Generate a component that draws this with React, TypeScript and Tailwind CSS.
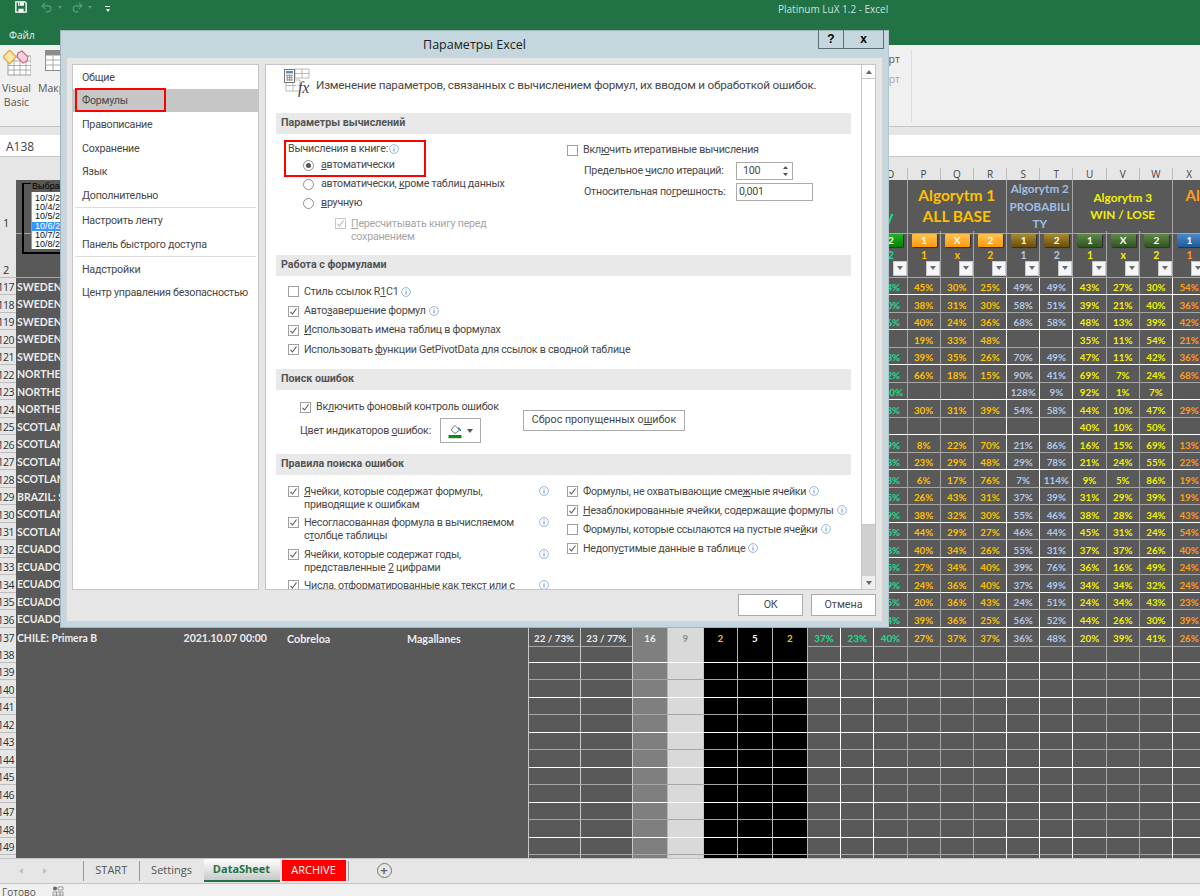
import React from "react";
import { Undo2, Redo2 } from "lucide-react";

const gridCols =
  "grid grid-cols-[16px_167.6px_102.4px_121px_121.6px_52px_52.4px_35px_35.6px_34.4px_35px_35px_repeat(14,33.2px)]";

const GREEN = "text-[#12e08c]";
const ORANGE = "text-[#ffc000]";
const BLUE = "text-[#b4c7e7]";
const YEL = "text-[#f2f200]";
const ORG2 = "text-[#ff9c1a]";
const colColor = [GREEN, GREEN, GREEN, ORANGE, ORANGE, ORANGE, BLUE, BLUE, YEL, YEL, YEL, ORG2];

// right border of columns E.. (index 0 = E)
const colBorder = [
  "border-[#c8c8c8]", "border-[#c8c8c8]", "border-[#b5b5b5]", "border-[#c8c8c8]", "border-[#b5b5b5]", "border-[#b5b5b5]",
  "border-[#b5b5b5]", "border-white", "border-white", "border-[#a6a6a6]", "border-[#a6a6a6]", "border-[#a6a6a6]",
  "border-white", "border-white", "border-white", "border-[#a6a6a6]", "border-[#a6a6a6]", "border-white",
  "border-white", "border-white", "border-white", "border-white",
];

const rowData: [number, string, string, number[]][] = [
  [117, "SWEDEN", "34", [45, 30, 25, 49, 49, 43, 27, 30, 54]],
  [118, "SWEDEN", "30", [38, 31, 30, 58, 51, 39, 21, 40, 36]],
  [119, "SWEDEN", "36", [40, 24, 36, 68, 58, 48, 13, 39, 42]],
  [120, "SWEDEN", "", [19, 33, 48, 0, 0, 35, 11, 54, 21]],
  [121, "SWEDEN", "38", [39, 35, 26, 70, 49, 47, 11, 42, 36]],
  [122, "NORTHERN", "32", [66, 18, 15, 90, 41, 69, 7, 24, 68]],
  [123, "NORTHERN", "100", [0, 0, 0, 128, 9, 92, 1, 7, 0]],
  [124, "NORTHERN", "33", [30, 31, 39, 54, 58, 44, 10, 47, 29]],
  [125, "SCOTLAND", "", [0, 0, 0, 0, 0, 40, 10, 50, 0]],
  [126, "SCOTLAND", "39", [8, 22, 70, 21, 86, 16, 15, 69, 13]],
  [127, "SCOTLAND", "38", [23, 29, 48, 29, 78, 21, 24, 55, 22]],
  [128, "SCOTLAND", "38", [6, 17, 76, 7, 114, 9, 5, 86, 19]],
  [129, "BRAZIL: Serie", "35", [26, 43, 31, 37, 39, 31, 29, 39, 19]],
  [130, "SCOTLAND", "39", [38, 32, 30, 55, 46, 38, 28, 34, 43]],
  [131, "SCOTLAND", "35", [44, 29, 27, 46, 44, 45, 31, 24, 54]],
  [132, "ECUADOR", "38", [40, 34, 26, 55, 31, 37, 37, 26, 40]],
  [133, "ECUADOR", "35", [27, 34, 40, 39, 76, 36, 16, 49, 24]],
  [134, "ECUADOR", "39", [24, 36, 40, 37, 49, 34, 34, 32, 24]],
  [135, "ECUADOR", "35", [20, 36, 43, 24, 51, 24, 34, 43, 23]],
  [136, "ECUADOR", "34", [39, 36, 25, 56, 52, 44, 26, 30, 39]],
];

function whiteLine(n: number) {
  if (n <= 128) return n % 2 === 1;
  return n % 2 === 0;
}

function RowNum({ n }: { n: number }) {
  return (
    <div className="h-full bg-[#e6e6e6] border-b border-[#bdbdbd] text-[#333] text-[10.5px] tracking-[-0.5px] font-normal leading-[14px] overflow-hidden flex justify-end items-center pr-[2px] pt-[3px] font-['Open_Sans']">
      <span className="shrink-0">{n}</span>
    </div>
  );
}

function HeadNum({ n, pb }: { n: number; pb: string }) {
  return (
    <div className={`h-full bg-[#e6e6e6] border-b border-[#bdbdbd] text-[#333] text-[11px] font-normal leading-[14px] flex items-end pl-[3px] font-['Open_Sans'] ${pb}`}>
      {n}
    </div>
  );
}

function Cell({ idx, text, color, bg, line }: { idx: number; text?: string; color?: string; bg?: string; line: string }) {
  return (
    <div className={`flex items-center justify-center pt-[3px] leading-[12px] border-r border-b ${colBorder[idx]} ${line} ${bg ?? ""} ${color ?? ""}`}>
      {text}
    </div>
  );
}

function DataRow({ n, a, vals }: { n: number; a: string; vals: number[] }) {
  const line = whiteLine(n) ? "!border-b-white" : "!border-b-[#a6a6a6]";
  return (
    <div className={`${gridCols} h-[17.5px] font-['Lato'] font-bold text-[9.8px] text-[#ececec]`}>
      <RowNum n={n} />
      <div className="col-span-4 flex items-center pl-[1px] pt-[3px] text-[10.5px] overflow-hidden whitespace-nowrap border-r border-[#c8c8c8]">{a}</div>
      {Array.from({ length: 9 }).map((_, i) => (
        <Cell key={i} idx={i} line={line} bg={i === 2 ? "bg-[#7f7f7f]" : i === 3 ? "bg-[#d9d9d9]" : i >= 4 && i <= 6 ? "bg-black" : ""} />
      ))}
      {vals.map((v, i) => (
        <Cell key={i} idx={i + 9} line={line} text={v ? `${v}%` : ""} color={colColor[i + 2]} />
      ))}
    </div>
  );
}

function Row137() {
  const line = "!border-b-[#a6a6a6]";
  const vals = [37, 23, 40, 27, 37, 37, 36, 48, 20, 39, 41, 26];
  return (
    <div className={`${gridCols} h-[17.5px] font-['Lato'] font-bold text-[9.8px] text-[#ececec]`}>
      <RowNum n={137} />
      <div className="flex items-center pl-[1px] pt-[3px] text-[10.4px] whitespace-nowrap">CHILE: Primera B</div>
      <div className="flex items-center pt-[3px] text-[10.5px] whitespace-nowrap">2021.10.07 00:00</div>
      <div className="flex items-center pt-[3px] pl-[1px] text-[10.8px] whitespace-nowrap">Cobreloa</div>
      <div className="flex items-center pt-[3px] text-[10.7px] whitespace-nowrap border-r border-[#c8c8c8]">Magallanes</div>
      <Cell idx={0} line={line} text="22 / 73%" />
      <Cell idx={1} line={line} text="23 / 77%" />
      <Cell idx={2} line={line} text="16" bg="bg-[#7f7f7f]" />
      <Cell idx={3} line={line} text="9" bg="bg-[#d9d9d9]" color="text-[#8c8c8c]" />
      <Cell idx={4} line={line} text="2" bg="bg-black" color={ORANGE} />
      <Cell idx={5} line={line} text="5" bg="bg-black" color="text-white" />
      <Cell idx={6} line={line} text="2" bg="bg-black" color={ORANGE} />
      {vals.map((v, i) => (
        <Cell key={i} idx={i + 7} line={line} text={`${v}%`} color={colColor[i]} />
      ))}
    </div>
  );
}

function EmptyRow({ n }: { n: number }) {
  const line = whiteLine(n) ? "!border-b-white" : "!border-b-[#a6a6a6]";
  return (
    <div className={`${gridCols} h-[17.5px]`}>
      <RowNum n={n} />
      <div className="col-span-4 border-r border-[#c8c8c8]" />
      {Array.from({ length: 21 }).map((_, i) => (
        <Cell key={i} idx={i} line={line} bg={i === 2 ? "bg-[#7f7f7f]" : i === 3 ? "bg-[#d9d9d9]" : i >= 4 && i <= 6 ? "bg-black" : ""} />
      ))}
    </div>
  );
}

function HeadCell({ label, sub, btn, color }: { label: string; sub: string; btn: string; color: string }) {
  return (
    <div className={`relative border-r border-b border-[#a6a6a6] flex flex-col items-start pl-[4px] pt-[3px] ${color}`}>
      <div className={`w-[25px] h-[13px] rounded-[1px] flex items-center justify-center text-white text-[10px] font-bold leading-none shadow-[1px_1px_1px_rgba(0,0,0,0.5)] ${btn}`}>
        {label}
      </div>
      <div className="w-[25px] text-center text-[10.5px] font-bold leading-[15px] mt-[1px]">{sub}</div>
      <div className="absolute right-0 bottom-[1px] w-[14px] h-[15px] bg-[#f4f6fa] border border-[#c9c9c9] flex items-center justify-center">
        <div className="w-0 h-0 border-l-[3.5px] border-r-[3.5px] border-t-[4px] border-l-transparent border-r-transparent border-t-[#6b6b6b]" />
      </div>
    </div>
  );
}

function HeaderRows() {
  return (
    <>
      <div className={`${gridCols} h-[50.5px] font-['Lato'] font-bold`}>
        <HeadNum n={1} pb="pb-[3px]" />
        <div className="col-span-14 border-r border-b border-[#a6a6a6] flex items-end justify-end pr-[13px] pb-[3px] text-[17px] text-[#12e08c] whitespace-nowrap">
          Probability
        </div>
        <div className="col-span-3 border-r border-b border-[#a6a6a6] flex flex-col items-center justify-center text-[#ffc000] text-[15.5px] leading-[21.5px]">
          <span>Algorytm 1</span>
          <span>ALL BASE</span>
        </div>
        <div className="col-span-2 border-r border-b border-[#a6a6a6] flex flex-col items-center justify-center text-[#9fbfe4] text-[11.7px] leading-[17.5px]">
          <span>Algorytm 2</span>
          <span>PROBABILI</span>
          <span>TY</span>
        </div>
        <div className="col-span-3 border-r border-b border-[#a6a6a6] flex flex-col items-center justify-center text-[#f2f200] text-[11.8px] leading-[17.5px]">
          <span>Algorytm 3</span>
          <span>WIN / LOSE</span>
        </div>
        <div className="col-span-3 border-b border-[#a6a6a6] flex flex-col items-center justify-start pt-[5px] text-[#ff9c1a] text-[15px] leading-[20px] whitespace-nowrap">
          <span>Algorytm 4</span>
        </div>
      </div>
      <div className={`${gridCols} h-[47px] font-['Lato']`}>
        <HeadNum n={2} pb="pb-0" />
        <div className="col-span-13 border-r border-b border-[#a6a6a6]" />
        <HeadCell label="2" sub="2" btn="bg-gradient-to-b from-[#22b022] to-[#068006]" color={GREEN} />
        <HeadCell label="1" sub="1" btn="bg-gradient-to-b from-[#ffc24a] to-[#ff9a00]" color={ORANGE} />
        <HeadCell label="X" sub="x" btn="bg-gradient-to-b from-[#ffc24a] to-[#ff9a00]" color={ORANGE} />
        <HeadCell label="2" sub="2" btn="bg-gradient-to-b from-[#ffc24a] to-[#ff9a00]" color={ORANGE} />
        <HeadCell label="1" sub="1" btn="bg-gradient-to-b from-[#a68a30] to-[#6b4f08]" color={BLUE} />
        <HeadCell label="2" sub="2" btn="bg-gradient-to-b from-[#a68a30] to-[#6b4f08]" color={BLUE} />
        <HeadCell label="1" sub="1" btn="bg-gradient-to-b from-[#5f8a4a] to-[#2f5420]" color={YEL} />
        <HeadCell label="X" sub="x" btn="bg-gradient-to-b from-[#5f8a4a] to-[#2f5420]" color={YEL} />
        <HeadCell label="2" sub="2" btn="bg-gradient-to-b from-[#5f8a4a] to-[#2f5420]" color={YEL} />
        <HeadCell label="1" sub="1" btn="bg-gradient-to-b from-[#4a8ac8] to-[#1f5a9a]" color={ORG2} />
      </div>
    </>
  );
}

const letters = ["A", "C", "D", "E", "F", "G", "H", "I", "J", "K", "L", "M", "N", "O", "P", "Q", "R", "S", "T", "U", "V", "W", "X", "Y", "Z"];

function ColumnHeaders() {
  return (
    <div className={`${gridCols} h-[12px] bg-[#e6e6e6] text-[#444] text-[10px] leading-[12px] font-['Open_Sans']`}>
      <div />
      {letters.map((l) => (
        <div key={l} className="text-center border-r border-[#bdbdbd]">
          {l}
        </div>
      ))}
    </div>
  );
}

function Info({ className = "" }: { className?: string }) {
  return (
    <svg width="10" height="10" viewBox="0 0 10 10" className={`shrink-0 ${className}`}>
      <circle cx="5" cy="5" r="4.4" fill="none" stroke="#8ab0dc" strokeWidth="0.9" />
      <path d="M5 2.4v.9M5 4.2v3.3" stroke="#5f8fc8" strokeWidth="1" />
    </svg>
  );
}

function Check({ on, disabled, className = "" }: { on?: boolean; disabled?: boolean; className?: string }) {
  return (
    <span className={`inline-flex shrink-0 w-[11px] h-[11px] border ${disabled ? "border-[#c8c8c8]" : "border-[#a0a0a0]"} bg-white items-center justify-center ${className}`}>
      {on && (
        <svg width="9" height="9" viewBox="0 0 9 9">
          <path d="M1.5 4.8 3.5 7 7.5 1.5" fill="none" stroke={disabled ? "#b5b5b5" : "#555"} strokeWidth="1.1" />
        </svg>
      )}
    </span>
  );
}

function Radio({ on }: { on?: boolean }) {
  return (
    <span className="inline-flex shrink-0 w-[11px] h-[11px] rounded-full border border-[#8f8f8f] bg-white items-center justify-center">
      {on && <span className="w-[5px] h-[5px] rounded-full bg-[#555]" />}
    </span>
  );
}

function Section({ children }: { children: React.ReactNode }) {
  return (
    <div className="ml-[10px] w-[575px] h-[21px] bg-[#e9e9e9] flex items-center pl-[5px] font-bold text-[#555] text-[10.7px] tracking-normal">
      {children}
    </div>
  );
}

function FxIcon() {
  return (
    <svg width="30" height="30" viewBox="0 0 30 30" className="shrink-0">
      <path d="M12 1h14v9H12zM3 12h14v11H3zM19 1v9M12 5.5h14M3 17.5h10M10 12v11" fill="none" stroke="#a8a8a8" strokeWidth="0.8" />
      <rect x="1.5" y="1.5" width="10" height="13" fill="#fff" stroke="#666" strokeWidth="0.9" />
      <rect x="3" y="3" width="7" height="2.4" fill="#4f8fd0" />
      <path d="M3 7.5h7M3 9.7h7M3 11.9h7M4.7 6.5v6.6M6.5 6.5v6.6M8.3 6.5v6.6" stroke="#8a8a8a" strokeWidth="0.8" />
      <text x="15" y="25" fontFamily="Liberation Serif" fontStyle="italic" fontSize="16" fill="#444">fx</text>
    </svg>
  );
}

const list1 = ["Общие", "Формулы", "Правописание", "Сохранение", "Язык", "Дополнительно"];
const list2 = ["Настроить ленту", "Панель быстрого доступа"];
const list3 = ["Надстройки", "Центр управления безопасностью"];

function ListItem({ t, sel }: { t: string; sel?: boolean }) {
  return <div className={`h-[23.6px] flex items-center pl-[9px] pt-[2px] whitespace-nowrap ${sel ? "bg-[#c6c6c6]" : ""}`}>{t}</div>;
}

function RedBox({ className }: { className: string }) {
  return <div className={`absolute border-2 border-[#ff0000] ${className}`} />;
}

function Dialog() {
  return (
    <div className="absolute left-[60px] top-[30px] w-[829px] h-[598px] bg-[#c4d7de] border border-[#9fb2ba] border-r-[#b3c6cd] flex flex-col font-['Roboto'] text-[10.7px] tracking-[-0.25px] text-[#484848]">
      <div className="relative h-[26px] flex items-end justify-center text-[#222] text-[12.5px] leading-[20px] tracking-normal shrink-0 font-['Open_Sans']">
        <span className="-translate-y-[2px]">Параметры Excel</span>
        <div className="absolute right-[4px] top-[-1px] flex h-[19px] border border-[#5b6d75] border-t-0 text-black font-bold text-[12px]">
          <div className="w-[25px] border-r border-[#5b6d75] flex items-center justify-center font-['Liberation_Sans']">?</div>
          <div className="w-[39px] flex items-center justify-center font-['Liberation_Sans']">x</div>
        </div>
      </div>
      <div className="mx-[5px] flex-1 bg-[#e6e6e6] border border-[#d4d4d4] mb-[5px] flex flex-col pt-[6px] pl-[5px] pr-[6px]">
        <div className="flex gap-[6px] h-[526px]">
          <div className="relative w-[187px] bg-white border border-[#c6c6c6] shrink-0">
            {list1.map((t) => (
              <ListItem key={t} t={t} sel={t === "Формулы"} />
            ))}
            <div className="h-px bg-[#dcdcdc] mx-[2px] mb-[1px]" />
            {list2.map((t) => (
              <ListItem key={t} t={t} />
            ))}
            <div className="h-px bg-[#dcdcdc] mx-[2px]" />
            {list3.map((t) => (
              <ListItem key={t} t={t} />
            ))}
            <RedBox className="left-[2px] top-[23px] w-[91px] h-[24px]" />
          </div>

          <div className="relative flex-1 bg-white border border-[#c6c6c6] flex overflow-hidden">
            <div className="flex-1 overflow-hidden">
              <div className="h-[48px] flex items-start pl-[17px] pt-[3px] gap-[3px]">
                <FxIcon />
                <span className="mt-[9px] text-[11.7px] tracking-[-0.2px] whitespace-nowrap">
                  Изменение параметров, связанных с вычислением формул, их вводом и обработкой ошибок.
                </span>
              </div>

              <Section>Параметры вычислений</Section>
              <div className="h-[121px] flex pl-[22px] pt-[7px]">
                <div className="w-[279px] shrink-0">
                  <div className="h-[16px] flex items-center gap-[1px]">
                    Вычисления в книге:<Info />
                  </div>
                  <div className="pl-[15px] -mt-[1px]">
                    <div className="h-[19px] flex items-center gap-[7px]"><Radio on /><span><u>а</u>втоматически</span></div>
                    <div className="h-[19px] flex items-center gap-[7px]"><Radio /><span>автоматически, <u>к</u>роме таблиц данных</span></div>
                    <div className="h-[19px] flex items-center gap-[7px]"><Radio /><span><u>в</u>ручную</span></div>
                    <div className="flex items-start gap-[5px] pl-[32px] pt-[4px] leading-[13px] text-[#a6a6a6]">
                      <Check on disabled className="mt-[1px]" />
                      <span><u>П</u>ересчитывать книгу перед<br />сохранением</span>
                    </div>
                  </div>
                </div>
                <div>
                  <div className="h-[18px] flex items-center gap-[5px]">
                    <Check />
                    <span>Вкл<u>ю</u>чить итеративные вычисления</span>
                  </div>
                  <div className="h-[20px] mt-[2px] flex items-center pl-[17px]">
                    <span className="w-[152px] shrink-0 whitespace-nowrap">Предельное <u>ч</u>исло итераций:</span>
                    <div className="w-[57px] h-[18px] border border-[#ababab] flex items-center justify-between pl-[6px] pr-[3px]">
                      <span>100</span>
                      <svg width="7" height="12" viewBox="0 0 7 12"><path d="M3.5 1 6 4H1zM3.5 11 1 8h5z" fill="#555" /></svg>
                    </div>
                  </div>
                  <div className="h-[20px] mt-[1px] flex items-center pl-[17px]">
                    <span className="w-[152px] shrink-0 whitespace-nowrap">Относительная по<u>г</u>решность:</span>
                    <div className="w-[77px] h-[18px] border border-[#ababab] flex items-center pl-[2px]">0,001</div>
                  </div>
                </div>
              </div>

              <Section>Работа с формулами</Section>
              <div className="h-[93px] pl-[22px] pt-[6px]">
                {[
                  [false, <>Стиль ссылок R<u>1</u>C1</>, true],
                  [true, <>Авто<u>з</u>авершение формул</>, true],
                  [true, <><u>И</u>спользовать имена таблиц в формулах</>, false],
                  [true, <>Использовать <u>ф</u>ункции GetPivotData для ссылок в сводной таблице</>, false],
                ].map(([on, t, i], k) => (
                  <div key={k} className="h-[19.4px] flex items-center gap-[5px]">
                    <Check on={on as boolean} />
                    <span>{t as React.ReactNode}</span>
                    {i && <Info className="-ml-[2px]" />}
                  </div>
                ))}
              </div>

              <Section>Поиск ошибок</Section>
              <div className="h-[64px] flex pl-[34px]">
                <div className="w-[223px] shrink-0">
                  <div className="h-[18px] mt-[8px] flex items-center gap-[5px]">
                    <Check on />
                    <span>Вк<u>л</u>ючить фоновый контроль ошибок</span>
                  </div>
                  <div className="flex items-center mt-[2px]">
                    <span className="w-[140px] shrink-0 whitespace-nowrap pt-[1px]">Цвет индикаторов <u>о</u>шибок:</span>
                    <div className="w-[41px] h-[25px] border border-[#ababab] flex items-center justify-center gap-[5px]">
                      <svg width="14" height="16" viewBox="0 0 14 16">
                        <path d="M3 7 7 2.5l4.5 4.5L7 10.5z" fill="#fff" stroke="#666" strokeWidth="0.9" />
                        <path d="M10 5c1.6.6 2.5 1.7 2.5 3" fill="none" stroke="#3c7fc4" strokeWidth="1.4" />
                        <rect x="0.5" y="12" width="13" height="3.2" fill="#0c8a12" />
                      </svg>
                      <span className="w-0 h-0 border-l-[3.5px] border-r-[3.5px] border-t-[4px] border-l-transparent border-r-transparent border-t-[#555]" />
                    </div>
                  </div>
                </div>
                <div className="mt-[20px] w-[162px] h-[21px] border border-[#ababab] flex items-center justify-center whitespace-nowrap tracking-normal">
                  Сброс пропущенных о<u>ш</u>ибок
                </div>
              </div>

              <Section>Правила поиска ошибок</Section>
              <div className="flex pl-[22px] pt-[10px] leading-[13px]">
                <div className="w-[279px] shrink-0">
                  {[
                    <><u>Я</u>чейки, которые содержат формулы,<br />приводящие к ошибкам</>,
                    <>Несогласованная формула в вычисляемом<br />с<u>т</u>олбце таблицы</>,
                    <>Ячейки, которые содержат годы,<br />представленные <u>2</u> цифрами</>,
                    <>Числа, отформатированные как т<u>е</u>кст или с<br />предшествующим апострофом</>,
                  ].map((t, k) => (
                    <div key={k} className="h-[31.3px] flex items-start">
                      <Check on className="mt-[1px] mr-[5px]" />
                      <span className="w-[235px] shrink-0 whitespace-nowrap">{t}</span>
                      <Info className="mt-[1px]" />
                    </div>
                  ))}
                </div>
                <div>
                  {[
                    [true, <>Формулы, не охватывающие сме<u>ж</u>ные ячейки</>],
                    [true, <><u>Н</u>езаблокированные ячейки, содержащие формулы</>],
                    [false, <>Формулы, которые ссылаются на пустые яче<u>й</u>ки</>],
                    [true, <>Недопу<u>с</u>тимые данные в таблице</>],
                  ].map(([on, t], k) => (
                    <div key={k} className="h-[19px] flex items-start gap-[5px]">
                      <Check on={on as boolean} className="mt-[1px]" />
                      <span className="whitespace-nowrap">{t as React.ReactNode}</span>
                      <Info className="mt-[1px] -ml-[2px]" />
                    </div>
                  ))}
                </div>
              </div>
            </div>

            <div className="w-[14px] shrink-0 flex flex-col border-l border-[#c6c6c6] bg-[#d0d0d0]">
              <div className="h-[14px] bg-white border-b border-[#c6c6c6] flex items-center justify-center">
                <span className="w-0 h-0 border-l-[3.5px] border-r-[3.5px] border-b-[4px] border-l-transparent border-r-transparent border-b-[#666]" />
              </div>
              <div className="h-[446px] bg-white border-b border-[#c6c6c6]" />
              <div className="flex-1" />
              <div className="h-[13px] bg-[#eeeeee] flex items-center justify-center">
                <span className="w-0 h-0 border-l-[3.5px] border-r-[3.5px] border-t-[4px] border-l-transparent border-r-transparent border-t-[#666]" />
              </div>
            </div>
            <RedBox className="left-[18px] top-[75px] w-[142px] h-[37px]" />
          </div>
        </div>
        <div className="flex justify-end gap-[8px] mt-[4px]">
          <div className="w-[65px] h-[22px] bg-white border border-[#ababab] flex items-center justify-center">ОК</div>
          <div className="w-[65px] h-[22px] bg-white border border-[#ababab] flex items-center justify-center tracking-normal">Отмена</div>
        </div>
      </div>
    </div>
  );
}

function TitleBar() {
  return (
    <div className="h-[45px] bg-[#217346] shrink-0 text-white font-['Open_Sans']">
      <div className="flex items-start h-[19px] pl-[15px] pt-[1px]">
        <svg width="12" height="12" viewBox="0 0 14 14">
          <path d="M1 1h10.5L13 2.5V13H1z" fill="none" stroke="#fff" strokeWidth="1.6" />
          <path d="M3.5 1.5h7v4h-7zM4 9h6v4H4z" fill="#fff" />
          <path d="M5.2 2v3" stroke="#217346" />
        </svg>
        <Undo2 size={13} className="ml-[13px] text-[#5f9d7b]" />
        <span className="ml-[5px] mt-[5px] w-0 h-0 border-l-[2.5px] border-r-[2.5px] border-t-[3px] border-l-transparent border-r-transparent border-t-[#5f9d7b]" />
        <Redo2 size={13} className="ml-[9px] text-[#5f9d7b]" />
        <span className="ml-[4px] mt-[5px] w-0 h-0 border-l-[2.5px] border-r-[2.5px] border-t-[3px] border-l-transparent border-r-transparent border-t-[#5f9d7b]" />
        <div className="ml-[13px] mt-[5px] flex flex-col items-center gap-[2px]">
          <span className="w-[5px] h-px bg-white" />
          <span className="w-0 h-0 border-l-[2.5px] border-r-[2.5px] border-t-[3px] border-l-transparent border-r-transparent border-t-white" />
        </div>
        <span className="ml-[668px] mt-[1px] text-[10px] leading-[15px] text-[#cfe0d6] whitespace-nowrap">Platinum LuX 1.2 - Excel</span>
      </div>
      <div className="pl-[9px] mt-[9px] text-[10px] text-[#e8f0eb] leading-[14px]">Файл</div>
    </div>
  );
}

function Ribbon() {
  return (
    <div className="h-[81px] bg-[#f0f0f0] shrink-0 pt-[5px] font-['Open_Sans'] text-[10.5px] text-[#555]">
      <div className="w-[912px] h-[72px] border-r border-[#dcdcdc] flex justify-between pr-[11px]">
        <div className="flex pl-[3px] gap-[8px]">
          <div className="w-[27px] flex flex-col items-center">
            <svg width="28" height="26" viewBox="0 0 28 26" className="shrink-0">
              <rect x="5" y="6" width="23" height="19" fill="#fff" stroke="#8c8c8c" strokeWidth="0.8" />
              <path d="M5 11h23M5 15.5h23M5 20h23M11 6v19M17 6v19M23 6v19" stroke="#9a9a9a" strokeWidth="0.8" />
              <path d="M0 7 6.5 0 13 7l-6.5 7z" fill="#ffe7a8" stroke="#e3a93a" strokeWidth="1.2" />
              <path d="M15 3l4-2 6 6-1 4-4 2-6-6z" fill="#f8d2dd" stroke="#d9657f" strokeWidth="1.2" />
            </svg>
            <div className="mt-[5px] text-center leading-[14px]">Visual<br />Basic</div>
          </div>
          <div className="w-[40px] flex flex-col items-start">
            <svg width="40" height="26" viewBox="0 0 40 26" className="ml-[7px] shrink-0">
              <rect x="0.5" y="0.5" width="30" height="20" fill="#fff" stroke="#8c8c8c" />
              <rect x="0.5" y="0.5" width="30" height="5" fill="#8c8c8c" />
              <path d="M0 10h30M0 15h30M8 6v14M16 6v14" stroke="#9a9a9a" strokeWidth="0.8" />
            </svg>
            <div className="mt-[5px] leading-[14px] whitespace-nowrap">Макросы</div>
          </div>
        </div>
        <div className="flex flex-col items-end -mt-[1px] leading-[20px]">
          <span>Экспорт</span>
          <span className="text-[#a8a8a8]">Импорт</span>
        </div>
      </div>
    </div>
  );
}

function FormulaBar() {
  return (
    <div className="shrink-0 font-['Open_Sans']">
      <div className="h-[9px] bg-[#e6e6e6] border-t border-[#c6c6c6]" />
      <div className="h-[22px] bg-white border-b border-[#c6c6c6] flex items-center pl-[6px] pt-[2px] text-[12px] text-[#444]">A138</div>
      <div className="h-[11px] bg-[#e6e6e6]" />
    </div>
  );
}

function SheetListBox() {
  const dates = ["10/3/2021", "10/4/2021", "10/5/2021", "10/6/2021", "10/7/2021", "10/8/2021"];
  return (
    <div className="absolute left-[22px] top-[183px] w-[120px] h-[71px] border-l-2 border-b-2 border-t border-black font-['Liberation_Sans'] text-[9px] leading-[9px] text-[#111]">
      <div className="absolute left-[7px] -top-[2px] bg-[#595959] text-black px-px">Выбрать дату</div>
      <div className="absolute left-[7px] top-[8px] w-[100px] h-[57px] bg-white pt-[2px] pl-[3px] border-l border-[#999]">
        {dates.map((d, i) => (
          <div key={d} className={`h-[9.2px] -ml-[3px] pl-[3px] ${i === 3 ? "bg-[#3399ff] text-white" : ""}`}>{d}</div>
        ))}
      </div>
    </div>
  );
}

function Tabs() {
  return (
    <div className="h-[25px] bg-[#e6e6e6] border-t border-[#c6c6c6] shrink-0 flex items-center pb-[1px] font-['Open_Sans'] text-[11px] text-[#555]">
      <div className="w-[83px] flex gap-[20px] pl-[19px]">
        <span className="w-0 h-0 border-t-[3px] border-b-[3px] border-r-[4px] border-t-transparent border-b-transparent border-r-[#c2c2c2]" />
        <span className="w-0 h-0 border-t-[3px] border-b-[3px] border-l-[4px] border-t-transparent border-b-transparent border-l-[#c2c2c2]" />
      </div>
      <div className="w-[56.5px] h-[20px] border-l border-r border-[#9a9a9a] flex items-center justify-center">START</div>
      <div className="w-[64px] flex justify-center">Settings</div>
      <div className="w-[76px] h-[23px] bg-gradient-to-b from-[#ffffff] to-[#c9c9c9] border-b-2 border-[#217346] flex items-center justify-center font-bold text-[#217346]">DataSheet</div>
      <div className="ml-[2px] w-[64px] h-[21px] bg-[#ff0000] text-white flex items-center justify-center">ARCHIVE</div>
      <div className="ml-[2px] w-px h-[20px] bg-[#9a9a9a]" />
      <div className="ml-[28px] w-[15px] h-[15px] rounded-full border border-[#777] flex items-center justify-center text-[#666] text-[13px] leading-none font-bold">
        +
      </div>
    </div>
  );
}

function StatusBar() {
  return (
    <div className="h-[13px] bg-[#f0f0f0] border-t border-[#c6c6c6] shrink-0 flex font-['Open_Sans'] text-[10px] text-[#555] leading-[15px] overflow-hidden pl-[2px]">
      <span className="w-[50px] pt-[1px]">Готово</span>
      <svg width="12" height="12" viewBox="0 0 12 12" className="mt-[2px]">
        <circle cx="3" cy="2.5" r="2" fill="#666" />
        <path d="M6 1h5v3H6zM1 6h10v6H1zM4.5 6v6M8 6v6M1 9h10" fill="none" stroke="#888" strokeWidth="0.8" />
      </svg>
    </div>
  );
}

export default function App() {
  const extra = Array.from({ length: 13 }, (_, i) => 138 + i);
  return (
    <div className="relative w-[1200px] h-[896px] overflow-hidden bg-[#595959] flex flex-col">
      <TitleBar />
      <Ribbon />
      <FormulaBar />
      <ColumnHeaders />
      <div className="flex-1 overflow-hidden">
        <HeaderRows />
        {rowData.map(([n, a, o, v]) => (
          <DataRow key={n} n={n} a={a} vals={[Number(o) || 0, ...v]} />
        ))}
        <Row137 />
        {extra.map((n) => (
          <EmptyRow key={n} n={n} />
        ))}
      </div>
      <Tabs />
      <StatusBar />
      <SheetListBox />
      <Dialog />
    </div>
  );
}
